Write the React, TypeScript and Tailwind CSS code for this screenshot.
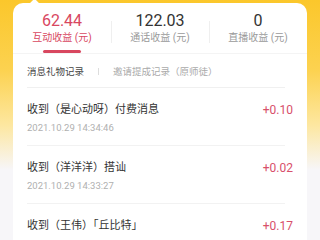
import React from "react";

const stats = [
  { value: "62.44", label: "互动收益 (元)", active: true },
  { value: "122.03", label: "通话收益 (元)", active: false },
  { value: "0", label: "直播收益 (元)", active: false },
];

const records = [
  { title: "收到（是心动呀）付费消息", time: "2021.10.29 14:34:46", amount: "+0.10" },
  { title: "收到（洋洋洋）搭讪", time: "2021.10.29 14:33:27", amount: "+0.02" },
  { title: "收到（王伟）「丘比特」", time: "2021.10.29 14:30:12", amount: "+0.17" },
];

export default function App() {
  return (
    <div
      className="h-[240px] overflow-hidden bg-[linear-gradient(180deg,#fbc72b_0px,#fcd250_70px,#fde7a0_125px,#f7f6f9_170px)]"
      style={{ fontFamily: 'Roboto, "Noto Sans CJK SC", "Noto Sans", sans-serif' }}
    >
      <div className="relative mx-[13px] mt-[3px] rounded-t-[10px] bg-white">
        {/* little pointer at top */}
        <div className="absolute left-[18px] top-[-3px] h-[7px] w-[7px] rotate-45 bg-white" />

        {/* Stats */}
        <div className="grid grid-cols-3 border-b border-[#f4f4f4] pt-[8px]">
          {stats.map((s, i) => (
            <div key={s.label} className="relative flex flex-col items-center">
              {i > 0 && (
                <div className="absolute left-0 top-[10px] h-[22px] w-px bg-[#efefef]" />
              )}
              <div
                className={`text-[16px] leading-[20px] ${
                  s.active ? "text-[#d8475f]" : "text-[#333333]"
                }`}
              >
                {s.value}
              </div>
              <div
                className={`text-[10px] leading-[14px] ${
                  s.active ? "text-[#d8475f]" : "text-[#9a9a9a]"
                }`}
              >
                {s.label}
              </div>
              <div
                className={`mt-[5px] h-[2.5px] w-[38px] rounded-full ${
                  s.active ? "bg-[#d8475f]" : "bg-transparent"
                }`}
              />
            </div>
          ))}
        </div>

        {/* Tabs */}
        <div className="px-[14px]">
          <div className="mr-[8px] flex items-center border-b border-[#f0f0f0] pb-[8px] pt-[11px] text-[9.5px] leading-[14px]">
            <span className="text-[#444444]">消息礼物记录</span>
            <span className="mx-[14px] h-[7px] w-px bg-[#dddddd]" />
            <span className="text-[#aaaaaa]">邀请提成记录（原师徒）</span>
          </div>

          {/* Records */}
          {records.map((r) => (
            <div key={r.title} className="mr-[8px] border-b border-[#f2f2f2] pb-[11px] pt-[14px]">
              <div className="-mr-[8px] flex items-center justify-between">
                <span className="text-[11px] leading-[16px] text-[#333333]">{r.title}</span>
                <span className="text-[12px] leading-[16px] text-[#d8506a]">{r.amount}</span>
              </div>
              <div className="mt-[4px] text-[9.5px] leading-[12px] text-[#b0b0b0]">{r.time}</div>
            </div>
          ))}
        </div>
      </div>
    </div>
  );
}
